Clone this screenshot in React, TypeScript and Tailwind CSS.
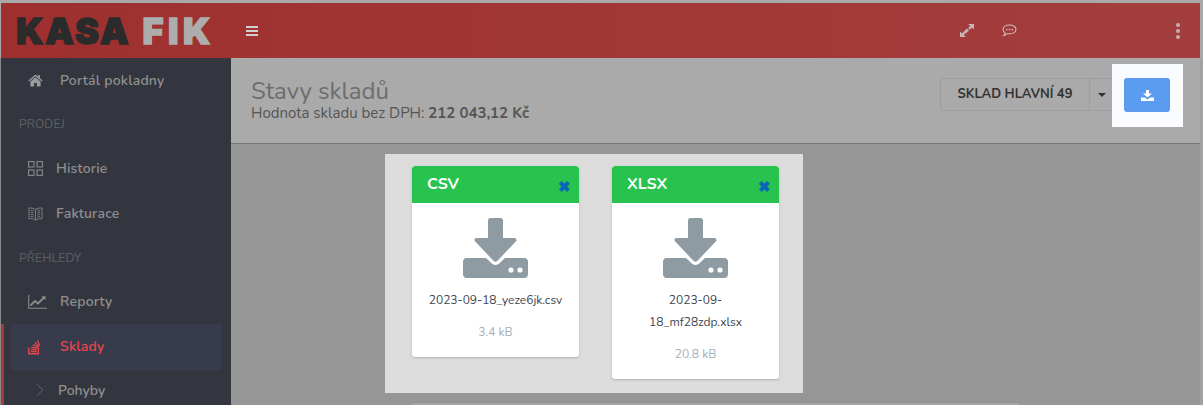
import React from "react";
import { ChevronRight } from "lucide-react";

const font = "font-['Nunito','Lato','Noto_Sans',sans-serif]";

function Home() {
  return (
    <svg viewBox="0 0 16 14" className="w-[15px] h-[13px]" fill="#9a9a9a">
      <path d="M8 0.5 0.3 7l.9 1L8 2.3 14.8 8l.9-1-3-2.500V1h-2v1.800L8 .5Z" />
      <path d="M8 3.400 2.500 8v5.400h4V9.600h3v3.800h4V8L8 3.400Z" />
    </svg>
  );
}
function Grid() {
  return (
    <svg viewBox="0 0 15 15" className="w-[15px] h-[15px]" fill="none" stroke="#8b8b8b" strokeWidth="1.1">
      <rect x="0.6" y="0.6" width="5.4" height="5.4" />
      <rect x="9" y="0.6" width="5.4" height="5.4" />
      <rect x="0.6" y="9" width="5.4" height="5.4" />
      <rect x="9" y="9" width="5.4" height="5.4" />
    </svg>
  );
}
function Book() {
  return (
    <svg viewBox="0 0 16 15" className="w-[15px] h-[14px]" fill="none" stroke="#8b8b8b" strokeWidth="0.9">
      <path d="M8 2.600C6.400 1.400 3.800 1 1 1v11.400c2.800 0 5.400.4 7 1.800 1.600-1.400 4.200-1.800 7-1.800V1c-2.800 0-5.400.4-7 1.600Zm0 0v11.600" />
      <path d="M3 3.600c1 0 2 .2 3 .6M3 5.800c1 0 2 .2 3 .6M3 8c1 0 2 .2 3 .6M3 10.200c1 0 2 .2 3 .6M13 3.600c-1 0-2 .2-3 .6M13 5.800c-1 0-2 .2-3 .6M13 8c-1 0-2 .2-3 .6M13 10.200c-1 0-2 .2-3 .6" />
    </svg>
  );
}
function Chart() {
  return (
    <svg viewBox="0 0 19 14" className="w-[19px] h-[14px]" fill="none" stroke="#8b8b8b">
      <path d="M.7 0v13.200H19" strokeWidth="1.1" />
      <path d="M2.500 10.500 7 6l3 2.500 6-6" strokeWidth="1.8" />
      <path d="M13.500 1.200h4v4Z" fill="#8b8b8b" stroke="none" />
    </svg>
  );
}
function Stack() {
  return (
    <svg viewBox="0 0 14 16" className="w-[13px] h-[16px]" fill="none" stroke="#e5474d" strokeWidth="1.5">
      <path d="M.8 8.500v6.700h10.400V8.500" />
      <path d="M2.800 13h6.400M2.900 10.600l6.500.8M3.700 8l6.300 1.800M5.400 5.300l5.400 3.200M7.600 3l4 4.600M10.400 1l2 5.800" />
    </svg>
  );
}
function Chat() {
  return (
    <svg viewBox="0 0 16 14" className="w-[15px] h-[13px]" fill="none" stroke="#d0bcbc" strokeWidth="1.1">
      <path d="M8 1C4.100 1 1 3 1 5.800c0 1.500.9 2.800 2.300 3.700-.2 1-.8 2-1.600 2.800 1.500-.2 3-.9 4-1.900.7.1 1.500.2 2.300.2 3.900 0 7-2.100 7-4.800S11.900 1 8 1Z" />
      <circle cx="5" cy="5.900" r=".9" fill="#d0bcbc" stroke="none" />
      <circle cx="8" cy="5.900" r=".9" fill="#d0bcbc" stroke="none" />
      <circle cx="11" cy="5.900" r=".9" fill="#d0bcbc" stroke="none" />
    </svg>
  );
}
function ExpandArrows() {
  return (
    <svg viewBox="0 0 14 13" className="w-[14px] h-[13px]" fill="#c9b5b5">
      <path d="M8 0h6v5.600l-2-2L9.800 5.700 8.200 4.100 10.300 2 8 0Z" />
      <path d="M0 7.400 2 9.400 4.200 7.300l1.600 1.600L3.700 11 6 13H0V7.400Z" />
      <path d="m4 7.200 3-2.800 2 2-3 2.800Z" />
    </svg>
  );
}
function BigDownload() {
  return (
    <svg viewBox="0 0 65 60" className="w-[65px] h-[60px]" fill="#8f9ba3">
      <path d="M25 2.500C25 1.100 26.100 0 27.500 0h10C38.900 0 40 1.100 40 2.500V20h11.500c1.800 0 2.700 2 1.500 3.300L34.300 43c-1 1-2.600 1-3.600 0L12 23.300C10.800 22 11.700 20 13.500 20H25V2.500Z" />
      <path d="M3.500 40H23l5.500 5.300c2.200 2.200 5.800 2.200 8 0L42 40h19.500c1.900 0 3.500 1.600 3.500 3.500v13c0 1.900-1.600 3.500-3.500 3.500h-58C1.600 60 0 58.400 0 56.500v-13C0 41.600 1.600 40 3.500 40Z" />
      <circle cx="48" cy="52" r="2.600" fill="#fff" />
      <circle cx="57" cy="52" r="2.600" fill="#fff" />
    </svg>
  );
}
function SmallDownload() {
  return (
    <svg viewBox="0 0 13 11" className="w-[13px] h-[11px]" fill="#fff">
      <path d="M5 0h3v3.500h3L6.500 7.500 2 3.500h3V0Z" />
      <path d="M0 7.500h3.600l2.900 2 2.900-2H13V11H0V7.500Z" />
    </svg>
  );
}

function NavItem({ icon, label, gap, active }: { icon: React.ReactNode; label: string; gap: string; active?: boolean }) {
  return (
    <div className={`ml-[10px] mr-[9px] pl-[17px] flex items-center rounded-[2px] ${active ? "h-[46px] bg-[#373b4b]" : "h-[45px]"}`}>
      <div className={`shrink-0 flex items-center ${gap}`}>{icon}</div>
      <span className={`text-[14px] font-semibold tracking-[0.2px] ${active ? "text-[#e5474d] pb-[2px]" : "text-[#8f8f8f]"}`}>{label}</span>
    </div>
  );
}

function Section({ label }: { label: string }) {
  return <div className="pl-[18px] text-[12px] tracking-[0.2px] text-[#5d6167] leading-[16px]">{label}</div>;
}

function FileCard({ type, name, size }: { type: string; name: React.ReactNode; size: string }) {
  return (
    <div className="w-[167px] self-start bg-white rounded-[3px] shadow-[0_1px_2px_rgba(60,90,120,0.3)] flex flex-col items-center overflow-hidden">
      <div className="w-full h-[37px] bg-[#28c24f] rounded-t-[3px] pl-[15px] pr-[8px] flex justify-between text-white">
        <span className="text-[16px] font-bold leading-[36px]">{type}</span>
        <span className="text-[#0a66b8] text-[15px] font-black leading-[42px]">✖</span>
      </div>
      <div className="mt-[15px]"><BigDownload /></div>
      <div className="mt-[11px] text-[12px] leading-[22px] text-[#3d4450] text-center px-[15px]">{name}</div>
      <div className="mt-[10px] mb-[14px] text-[12px] leading-[22px] text-[#a4afb9]">{size}</div>
    </div>
  );
}

export default function App() {
  return (
    <div className={`w-[1203px] h-[405px] overflow-hidden bg-[#969696] flex flex-col ${font}`}>
      <div className="h-[58px] shrink-0 bg-[#a9a9a9] pt-[3px] pl-[1px] pr-[3px]">
        <div className="h-[55px] bg-linear-to-r from-[#9f2f2f] to-[#a33e3e] flex items-center">
          <div className="w-[229px] pl-[15px] text-[36px] leading-[40px] font-black font-['Inter',sans-serif] flex shrink-0">
            <span className="text-[#2b2b2b] tracking-[2px] [-webkit-text-stroke:1.4px_#2b2b2b]">KASA</span>
            <span className="ml-[12px] text-[#adadad] tracking-[4.5px] [-webkit-text-stroke:1.4px_#adadad]">FIK</span>
          </div>
          <div className="ml-[16px] w-[12px] flex flex-col gap-[2px]">
            <i className="block h-[2px] bg-[#cfcfcf]" />
            <i className="block h-[2px] bg-[#cfcfcf]" />
            <i className="block h-[2px] bg-[#cfcfcf]" />
          </div>
          <div className="ml-auto flex items-center">
            <ExpandArrows />
            <div className="ml-[28px]"><Chat /></div>
            <div className="ml-[159px] mr-[20px] flex flex-col gap-[2px]">
              <i className="w-[4px] h-[4px] rounded-full bg-[#c4b0b0] block" />
              <i className="w-[4px] h-[4px] rounded-full bg-[#c4b0b0] block" />
              <i className="w-[4px] h-[4px] rounded-full bg-[#c4b0b0] block" />
            </div>
          </div>
        </div>
      </div>
      <div className="flex flex-1 min-h-0">
        <div className="w-[231px] shrink-0 bg-[#34363f] relative border-l-[1px] border-[#8a8a8a]">
          <NavItem icon={<Home />} label="Portál pokladny" gap="w-[32px]" />
          <div className="mt-[13px] mb-[14px]"><Section label="PRODEJ" /></div>
          <NavItem icon={<Grid />} label="Historie" gap="w-[28px]" />
          <NavItem icon={<Book />} label="Fakturace" gap="w-[28px]" />
          <div className="mt-[14px] mb-[13px]"><Section label="PŘEHLEDY" /></div>
          <NavItem icon={<Chart />} label="Reporty" gap="w-[32px]" />
          <NavItem icon={<Stack />} label="Sklady" gap="w-[32px]" active />
          <div className="h-[40px] pl-[28px] flex items-center gap-[7px]">
            <ChevronRight size={22} strokeWidth={0.9} color="#6b6e73" />
            <span className="text-[14px] font-semibold text-[#8f8f8f]">Pohyby</span>
          </div>
          <div className="absolute left-[0px] top-[266px] bottom-0 w-[3px] bg-[#a33b3e]" />
        </div>
        <div className="flex-1 min-w-0 flex flex-col border-r-[3px] border-[#a2a2a2]">
          <div className="h-[86px] shrink-0 bg-[#aaaaaa] border-b border-[#767676] flex justify-between pl-[20px]">
            <div className="pt-[21px]">
              <div className="text-[24px] leading-[24px] text-[#6d6d6d]">Stavy skladů</div>
              <div className="text-[15px] leading-[20px] text-[#555]">Hodnota skladu bez DPH: <b className="font-bold">212 043,12 Kč</b></div>
            </div>
            <div className="flex items-start">
              <div className="mt-[20px] h-[33px] w-[174px] border border-[#9e9e9e] rounded-[3px] flex text-[#333]">
                <div className="w-[148px] text-center text-[13px] font-bold leading-[31px]">SKLAD HLAVNÍ 49</div>
                <div className="flex-1 border-l border-[#9e9e9e] flex items-center justify-center">
                  <i className="block w-0 h-0 border-x-[4px] border-x-transparent border-t-[4px] border-t-[#333]" />
                </div>
              </div>
              <div className="ml-[-2px] w-[71px] h-[63px] bg-[#fafbfe] self-start mt-[6px] pl-[12px] pt-[14px]">
                <div className="w-[46px] h-[34px] rounded-[3px] bg-[#5c9cf0] flex items-center justify-center"><SmallDownload /></div>
              </div>
              <div className="w-[17px]" />
            </div>
          </div>
          <div className="flex-1">
            <div className="ml-[154px] mt-[10px] w-[418px] h-[239px] bg-[#dcdcdc] pl-[27px] pt-[12px] flex items-start gap-[33px]">
              <FileCard type="CSV" name="2023-09-18_yeze6jk.csv" size="3.4 kB" />
              <FileCard type="XLSX" name={<>2023-09-<br />18_mf28zdp.xlsx</>} size="20.8 kB" />
            </div>
            <div className="ml-[181px] mt-[9px] w-[607px] h-[4px] bg-[#a5a5a5] border-t border-[#88939b] rounded-t-[2px]" />
          </div>
        </div>
      </div>
    </div>
  );
}
